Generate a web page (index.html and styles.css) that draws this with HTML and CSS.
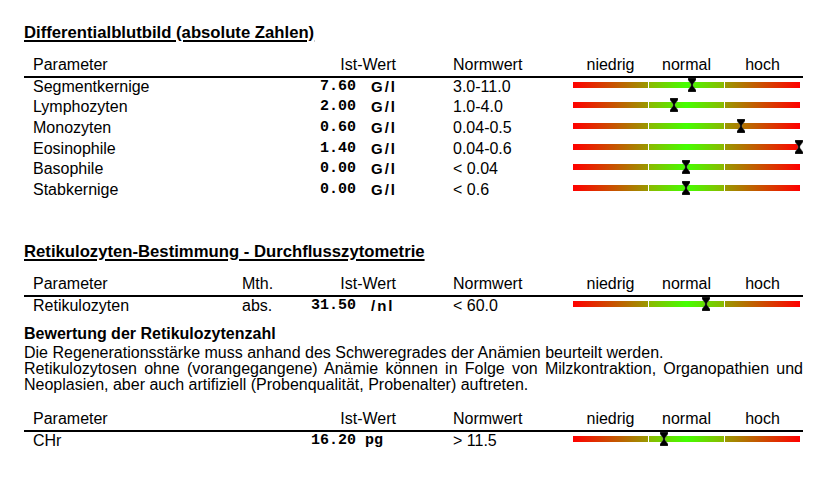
FILE: index.html
```html
<!DOCTYPE html>
<html lang="de">
<head>
<meta charset="utf-8">
<title>Differentialblutbild</title>
<link rel="stylesheet" href="styles.css">
</head>
<body>
<div class="page">
  <h2 class="title">Differentialblutbild (absolute Zahlen)</h2>
  <div class="tbl t1">
    <div class="row hdr">
      <span>Parameter</span>
      <span class="c-val-h">Ist-Wert</span>
      <span>Normwert</span>
      <span class="scale-h"><span>niedrig</span><span>normal</span><span>hoch</span></span>
    </div>
    <div class="row">
      <span>Segmentkernige</span>
      <span class="val"><span class="num">7.60</span><span class="unit">G/l</span></span>
      <span>3.0-11.0</span>
      <span class="bar"><i class="seg lo"></i><i class="seg mid"></i><i class="seg hi"></i><svg class="mk" style="left:52.4%" viewBox="0 0 8 14" width="8" height="14"><polygon points="0,0 8,0 8,2 5,6 5,8 8,12 8,14 0,14 0,12 3,8 3,6 0,2"/></svg></span>
    </div>
    <div class="row">
      <span>Lymphozyten</span>
      <span class="val"><span class="num">2.00</span><span class="unit">G/l</span></span>
      <span>1.0-4.0</span>
      <span class="bar"><i class="seg lo"></i><i class="seg mid"></i><i class="seg hi"></i><svg class="mk" style="left:44.5%" viewBox="0 0 8 14" width="8" height="14"><polygon points="0,0 8,0 8,2 5,6 5,8 8,12 8,14 0,14 0,12 3,8 3,6 0,2"/></svg></span>
    </div>
    <div class="row">
      <span>Monozyten</span>
      <span class="val"><span class="num">0.60</span><span class="unit">G/l</span></span>
      <span>0.04-0.5</span>
      <span class="bar"><i class="seg lo"></i><i class="seg mid"></i><i class="seg hi"></i><svg class="mk" style="left:74%" viewBox="0 0 8 14" width="8" height="14"><polygon points="0,0 8,0 8,2 5,6 5,8 8,12 8,14 0,14 0,12 3,8 3,6 0,2"/></svg></span>
    </div>
    <div class="row">
      <span>Eosinophile</span>
      <span class="val"><span class="num">1.40</span><span class="unit">G/l</span></span>
      <span>0.04-0.6</span>
      <span class="bar"><i class="seg lo"></i><i class="seg mid"></i><i class="seg hi"></i><svg class="mk" style="left:99.6%" viewBox="0 0 8 14" width="8" height="14"><polygon points="0,0 8,0 8,2 5,6 5,8 8,12 8,14 0,14 0,12 3,8 3,6 0,2"/></svg></span>
    </div>
    <div class="row">
      <span>Basophile</span>
      <span class="val"><span class="num">0.00</span><span class="unit">G/l</span></span>
      <span>&lt; 0.04</span>
      <span class="bar"><i class="seg lo"></i><i class="seg mid"></i><i class="seg hi"></i><svg class="mk" style="left:49.8%" viewBox="0 0 8 14" width="8" height="14"><polygon points="0,0 8,0 8,2 5,6 5,8 8,12 8,14 0,14 0,12 3,8 3,6 0,2"/></svg></span>
    </div>
    <div class="row">
      <span>Stabkernige</span>
      <span class="val"><span class="num">0.00</span><span class="unit">G/l</span></span>
      <span>&lt; 0.6</span>
      <span class="bar"><i class="seg lo"></i><i class="seg mid"></i><i class="seg hi"></i><svg class="mk" style="left:49.8%" viewBox="0 0 8 14" width="8" height="14"><polygon points="0,0 8,0 8,2 5,6 5,8 8,12 8,14 0,14 0,12 3,8 3,6 0,2"/></svg></span>
    </div>
  </div>

  <h2 class="title title2">Retikulozyten-Bestimmung - Durchflusszytometrie</h2>
  <div class="tbl t2">
    <div class="row hdr">
      <span>Parameter</span>
      <span>Mth.</span>
      <span class="c-val-h">Ist-Wert</span>
      <span>Normwert</span>
      <span class="scale-h"><span>niedrig</span><span>normal</span><span>hoch</span></span>
    </div>
    <div class="row">
      <span>Retikulozyten</span>
      <span>abs.</span>
      <span class="val"><span class="num">31.50</span><span class="unit">/nl</span></span>
      <span>&lt; 60.0</span>
      <span class="bar"><i class="seg lo"></i><i class="seg mid"></i><i class="seg hi"></i><svg class="mk" style="left:58.6%" viewBox="0 0 8 14" width="8" height="14"><polygon points="0,0 8,0 8,2 5,6 5,8 8,12 8,14 0,14 0,12 3,8 3,6 0,2"/></svg></span>
    </div>
  </div>

  <h3 class="sub">Bewertung der Retikulozytenzahl</h3>
  <p class="text">Die Regenerationsstärke muss anhand des Schweregrades der Anämien beurteilt werden.<br>Retikulozytosen ohne (vorangegangene) Anämie können in Folge von Milzkontraktion, Organopathien und Neoplasien, aber auch artifiziell (Probenqualität, Probenalter) auftreten.</p>

  <div class="tbl t3">
    <div class="row hdr">
      <span>Parameter</span>
      <span class="c-val-h">Ist-Wert</span>
      <span>Normwert</span>
      <span class="scale-h"><span>niedrig</span><span>normal</span><span>hoch</span></span>
    </div>
    <div class="row">
      <span>CHr</span>
      <span class="val"><span class="num">16.20</span><span class="unit mono">pg</span></span>
      <span>&gt; 11.5</span>
      <span class="bar"><i class="seg lo"></i><i class="seg mid"></i><i class="seg hi"></i><svg class="mk" style="left:40%" viewBox="0 0 8 14" width="8" height="14"><polygon points="0,0 8,0 8,2 5,6 5,8 8,12 8,14 0,14 0,12 3,8 3,6 0,2"/></svg></span>
    </div>
  </div>
</div>
</body>
</html>
```

FILE: styles.css
```css
html, body {
  margin: 0;
  padding: 0;
  background: #fff;
}
body {
  font-family: "Liberation Sans", Arial, sans-serif;
  font-size: 16px;
  color: #000;
}
.page {
  width: 779px;
  padding: 22.5px 0 0 24px;
}
.title {
  margin: 0;
  font-size: 16.7px;
  line-height: 20px;
  font-weight: bold;
  text-decoration: underline;
  text-decoration-thickness: 1.5px;
  text-underline-offset: 2px;
}
.title2 {
  margin-top: 40px;
}
.tbl {
  margin-top: 12px;
}
.row {
  display: grid;
  grid-template-columns: 278px 142px 120px 227px;
  padding-left: 9px;
  height: 20.7px;
  line-height: 18px;
}
.t2 .row {
  grid-template-columns: 209px 69px 142px 120px 227px;
}
.row.hdr {
  height: 21px;
  line-height: 20px;
  border-bottom: 2px solid #000;
}
.c-val-h {
  text-align: right;
  padding-right: 57px;
}
.scale-h {
  display: flex;
  gap: 1px;
}
.scale-h span {
  width: 75px;
  text-align: center;
}
.val {
  display: flex;
  font-weight: bold;
}
.num {
  width: 45px;
  text-align: right;
  font-family: "Liberation Mono", "Courier New", monospace;
  font-size: 15px;
}
.unit {
  margin-left: 15px;
  font-size: 15px;
  letter-spacing: 2px;
}
.unit.mono {
  margin-left: 9px;
  letter-spacing: 0;
  font-family: "Liberation Mono", "Courier New", monospace;
}
.bar {
  position: relative;
  display: flex;
  gap: 1px;
  height: 6px;
  margin-top: 4px;
}
.seg {
  display: block;
  width: 75px;
  height: 6px;
}
.seg.lo {
  background: linear-gradient(90deg, #ff0000 0%, #999900 100%);
}
.seg.mid {
  background: linear-gradient(90deg, #8cb800 0%, #44ff00 50%, #8cb800 100%);
}
.seg.hi {
  background: linear-gradient(90deg, #999900 0%, #ff0000 100%);
}
.mk {
  position: absolute;
  top: -4px;
  transform: translateX(-50%);
  fill: #000;
  stroke: #777;
  stroke-width: 0.4;
}
.sub {
  margin: 8px 0 0 0;
  font-size: 16px;
  line-height: 18px;
  font-weight: bold;
}
.text {
  margin: 2px 0 0 0;
  line-height: 16px;
  text-align: justify;
}
.t3 {
  margin-top: 15.5px;
}
```
